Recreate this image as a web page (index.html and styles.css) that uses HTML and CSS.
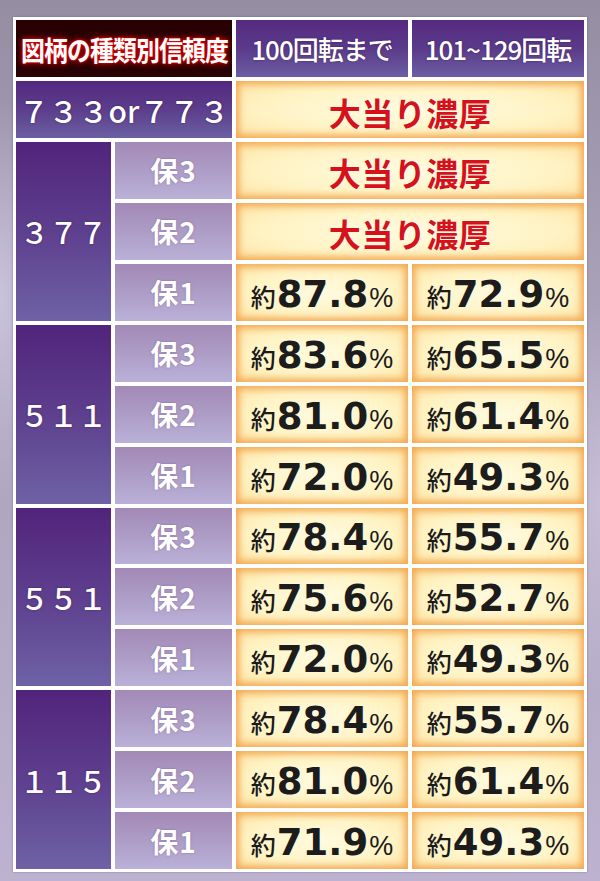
FILE: index.html
```html
<!DOCTYPE html>
<html lang="ja">
<head>
<meta charset="utf-8">
<title>図柄の種類別信頼度</title>
<link rel="stylesheet" href="styles.css">
</head>
<body>
<div class="frame">
  <div class="grid">
    <div class="cell title span2"><span class="title-text">図柄の種類別信頼度</span></div>
    <div class="cell head">100回転まで</div>
    <div class="cell head">101~129回転</div>

    <div class="cell row733 span2">７３３or７７３</div>
    <div class="cell val span2"><span class="jackpot">大当り濃厚</span></div>

    <div class="cell group span3row">３７７</div>
    <div class="cell label">保3</div>
    <div class="cell val span2"><span class="jackpot">大当り濃厚</span></div>
    <div class="cell label">保2</div>
    <div class="cell val span2"><span class="jackpot">大当り濃厚</span></div>
    <div class="cell label">保1</div>
    <div class="cell val"><span class="pre">約</span><span class="num">87.8</span><span class="pct">%</span></div>
    <div class="cell val"><span class="pre">約</span><span class="num">72.9</span><span class="pct">%</span></div>

    <div class="cell group span3row">５１１</div>
    <div class="cell label">保3</div>
    <div class="cell val"><span class="pre">約</span><span class="num">83.6</span><span class="pct">%</span></div>
    <div class="cell val"><span class="pre">約</span><span class="num">65.5</span><span class="pct">%</span></div>
    <div class="cell label">保2</div>
    <div class="cell val"><span class="pre">約</span><span class="num">81.0</span><span class="pct">%</span></div>
    <div class="cell val"><span class="pre">約</span><span class="num">61.4</span><span class="pct">%</span></div>
    <div class="cell label">保1</div>
    <div class="cell val"><span class="pre">約</span><span class="num">72.0</span><span class="pct">%</span></div>
    <div class="cell val"><span class="pre">約</span><span class="num">49.3</span><span class="pct">%</span></div>

    <div class="cell group span3row">５５１</div>
    <div class="cell label">保3</div>
    <div class="cell val"><span class="pre">約</span><span class="num">78.4</span><span class="pct">%</span></div>
    <div class="cell val"><span class="pre">約</span><span class="num">55.7</span><span class="pct">%</span></div>
    <div class="cell label">保2</div>
    <div class="cell val"><span class="pre">約</span><span class="num">75.6</span><span class="pct">%</span></div>
    <div class="cell val"><span class="pre">約</span><span class="num">52.7</span><span class="pct">%</span></div>
    <div class="cell label">保1</div>
    <div class="cell val"><span class="pre">約</span><span class="num">72.0</span><span class="pct">%</span></div>
    <div class="cell val"><span class="pre">約</span><span class="num">49.3</span><span class="pct">%</span></div>

    <div class="cell group span3row">１１５</div>
    <div class="cell label">保3</div>
    <div class="cell val"><span class="pre">約</span><span class="num">78.4</span><span class="pct">%</span></div>
    <div class="cell val"><span class="pre">約</span><span class="num">55.7</span><span class="pct">%</span></div>
    <div class="cell label">保2</div>
    <div class="cell val"><span class="pre">約</span><span class="num">81.0</span><span class="pct">%</span></div>
    <div class="cell val"><span class="pre">約</span><span class="num">61.4</span><span class="pct">%</span></div>
    <div class="cell label">保1</div>
    <div class="cell val"><span class="pre">約</span><span class="num">71.9</span><span class="pct">%</span></div>
    <div class="cell val"><span class="pre">約</span><span class="num">49.3</span><span class="pct">%</span></div>
  </div>
</div>
</body>
</html>
```

FILE: styles.css
```css
html, body {
  margin: 0;
  padding: 0;
}
body {
  width: 600px;
  height: 881px;
  box-sizing: border-box;
  padding: 17px 13px 9px 13px;
  overflow: hidden;
  font-family: "Noto Sans CJK JP", "Liberation Sans", sans-serif;
  background:
    radial-gradient(ellipse 60px 200px at 0px 300px, rgba(215,210,235,0.7), rgba(215,210,235,0) 100%),
    radial-gradient(ellipse 60px 200px at 600px 500px, rgba(215,205,230,0.6), rgba(215,205,230,0) 100%),
    linear-gradient(180deg, #958ea3 0%, #a79fb6 30%, #b3aac5 70%, #bdb3d0 100%);
}
.frame {
  background: #ffffff;
  padding: 3px;
  width: 574px;
  height: 855px;
  box-sizing: border-box;
  box-shadow: 0 0 2px rgba(60,40,80,0.4);
}
.grid {
  display: grid;
  height: 100%;
  grid-template-columns: 95px 117px 172px 172px;
  grid-template-rows: 57px 57px repeat(12, 1fr);
  gap: 4px;
}
.cell {
  display: flex;
  align-items: center;
  justify-content: center;
  color: #ffffff;
  overflow: hidden;
  white-space: nowrap;
}
.span2 { grid-column: span 2; }
.span3row { grid-row: span 3; }

.title {
  background: linear-gradient(180deg, #2a0002 0%, #1e0003 50%, #2a0305 100%);
}
.title-text {
  display: inline-block;
  font-size: 26px;
  font-weight: 700;
  letter-spacing: -1px;
  transform: scaleX(0.92) scaleY(1.05);
  text-shadow: 0 0 2px #ff1010, 0 0 5px #e00000, 0 0 9px #a00000;
}
.head {
  background: linear-gradient(180deg, #552a80 0%, #5b3a8a 50%, #6c5ea2 100%);
  font-family: "Noto Sans CJK JP", "Liberation Sans", sans-serif;
  font-size: 26px;
  font-weight: 500;
  letter-spacing: -1px;
  text-shadow: 0 0 2px rgba(40,10,60,0.6);
}
.row733 {
  background: linear-gradient(180deg, #52287f 0%, #5c3e8c 50%, #6b5fa1 100%);
  font-size: 30px;
  font-weight: 500;
  text-shadow: 0 0 2px rgba(40,10,60,0.6);
}
.group {
  background: linear-gradient(180deg, #51247b 0%, #5e3f8e 50%, #6e62a5 100%);
  font-size: 29px;
  font-weight: 500;
  text-shadow: 0 0 2px rgba(40,10,60,0.6);
}
.label {
  background: linear-gradient(180deg, #a389b6 0%, #ad9dc6 50%, #bab1d8 100%);
  font-size: 28px;
  font-weight: 700;
  letter-spacing: 1px;
  text-shadow: 0 0 2px rgba(90,60,120,0.5);
}
.val {
  background: radial-gradient(ellipse at 50% 50%, #fffbe0 0%, #fff3c4 60%, #fde2a2 100%);
  box-shadow: inset 0 0 7px 3px rgba(242,160,70,0.9);
  color: #1a1a1a;
  align-items: baseline;
  padding-top: 4px;
  box-sizing: border-box;
  align-content: center;
  flex-wrap: wrap;
}
.jackpot {
  color: #d5121c;
  font-size: 32px;
  font-weight: 700;
  letter-spacing: 0.5px;
  text-shadow: 0 0 2px rgba(255,255,255,0.8);
}
.pre {
  font-size: 25px;
  font-weight: 500;
  color: #1a1a1a;
}
.num {
  font-family: "DejaVu Sans", "Liberation Sans", sans-serif;
  font-size: 37px;
  font-weight: 700;
  letter-spacing: 0px;
  color: #1c1c1c;
  margin-left: 1px;
}
.pct {
  font-family: "Liberation Sans", sans-serif;
  font-size: 27px;
  font-weight: 400;
  color: #1a1a1a;
  margin-left: 1px;
}
```
